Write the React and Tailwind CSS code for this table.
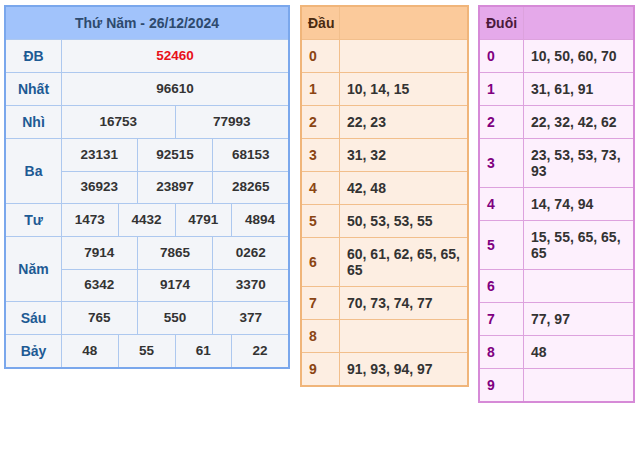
const font = { fontFamily: '"Liberation Sans", Arial, sans-serif' };

const results = [
  { label: "ĐB", rows: [["52460"]], red: true },
  { label: "Nhất", rows: [["96610"]] },
  { label: "Nhì", rows: [["16753", "77993"]] },
  { label: "Ba", rows: [["23131", "92515", "68153"], ["36923", "23897", "28265"]] },
  { label: "Tư", rows: [["1473", "4432", "4791", "4894"]] },
  { label: "Năm", rows: [["7914", "7865", "0262"], ["6342", "9174", "3370"]] },
  { label: "Sáu", rows: [["765", "550", "377"]] },
  { label: "Bảy", rows: [["48", "55", "61", "22"]] },
];

const dau = [
  "",
  "10, 14, 15",
  "22, 23",
  "31, 32",
  "42, 48",
  "50, 53, 53, 55",
  "60, 61, 62, 65, 65, 65",
  "70, 73, 74, 77",
  "",
  "91, 93, 94, 97",
];

const duoi = [
  "10, 50, 60, 70",
  "31, 61, 91",
  "22, 32, 42, 62",
  "23, 53, 53, 73, 93",
  "14, 74, 94",
  "15, 55, 65, 65, 65",
  "",
  "77, 97",
  "48",
  "",
];

function ResultTable() {
  return (
    <div className="w-[286px] shrink-0 border-2 border-[#7aa7ec] bg-[#f3f5f9]">
      <div className="h-8 flex items-center justify-center bg-[#a1c3fb] text-[14px] font-bold text-[#2e4a6e]">
        Thứ Năm - 26/12/2024
      </div>
      {results.map((r) => (
        <div key={r.label} className="flex border-t border-[#adc8ef]">
          <div className="w-[56px] shrink-0 border-r border-[#adc8ef] flex items-center justify-center text-[14px] font-bold text-[#1d5a94]">
            {r.label}
          </div>
          <div className="flex-1 flex flex-col">
            {r.rows.map((row, i) => (
              <div key={i} className={`flex h-8 ${i > 0 ? "border-t border-[#adc8ef]" : ""}`}>
                {row.map((v, j) => (
                  <div
                    key={j}
                    className={`flex-1 flex items-center justify-center text-[13.5px] font-bold ${
                      j > 0 ? "border-l border-[#adc8ef]" : ""
                    } ${r.red ? "text-[#e8101a]" : "text-[#333333]"}`}
                  >
                    {v}
                  </div>
                ))}
              </div>
            ))}
          </div>
        </div>
      ))}
    </div>
  );
}

function LotoTable({ title, data, width, labelW, outer, inner, head, cell, headText, labelText }) {
  return (
    <div className={`${width} shrink-0 border-2 ${outer} ${cell}`}>
      <div className={`flex h-8 ${head}`}>
        <div className={`${labelW} shrink-0 border-r ${inner} flex items-center px-[6px] text-[14px] font-bold ${headText}`}>
          {title}
        </div>
        <div className="flex-1" />
      </div>
      {data.map((v, i) => (
        <div key={i} className={`flex border-t ${inner}`}>
          <div className={`${labelW} shrink-0 border-r ${inner} flex items-center px-[7px] text-[14px] font-bold ${labelText}`}>
            {i}
          </div>
          <div className="flex-1 min-h-8 py-2 pl-[7px] pr-[2px] leading-4 text-[14px] font-bold text-[#333333]">
            {v}
          </div>
        </div>
      ))}
    </div>
  );
}

export default function App() {
  return (
    <div style={font} className="w-[641px] h-[464px] bg-white flex items-start pt-[5px] pl-[4px]">
      <ResultTable />
      <div className="ml-[10px]">
        <LotoTable
          title="Đầu"
          data={dau}
          width="w-[169px]"
          labelW="w-[38px]"
          outer="border-[#f0b57a]"
          inner="border-[#f2bf8c]"
          head="bg-[#fbca9b]"
          cell="bg-[#fdeee2]"
          headText="text-[#4a2a10]"
          labelText="text-[#8b4513]"
        />
      </div>
      <div className="ml-[9px]">
        <LotoTable
          title="Đuôi"
          data={duoi}
          width="w-[157px]"
          labelW="w-[44px]"
          outer="border-[#d68ad7]"
          inner="border-[#dda2de]"
          head="bg-[#e5a9ea]"
          cell="bg-[#fdf0fd]"
          headText="text-[#4a1a3a]"
          labelText="text-[#800080]"
        />
      </div>
    </div>
  );
}
